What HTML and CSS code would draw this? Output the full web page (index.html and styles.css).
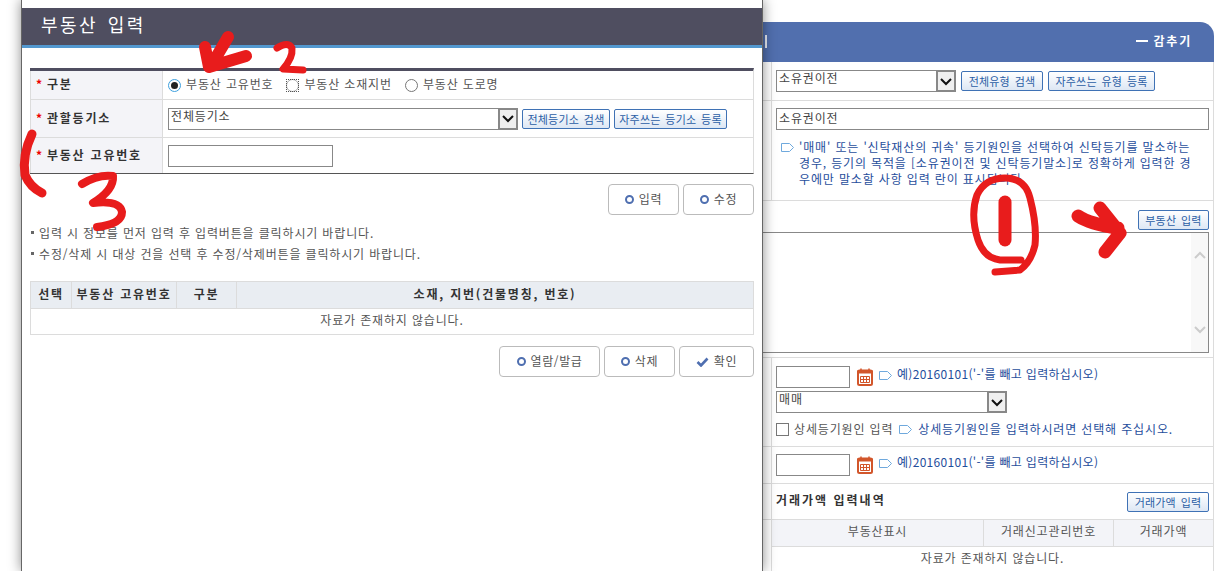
FILE: index.html
```html
<!DOCTYPE html>
<html lang="ko">
<head>
<meta charset="utf-8">
<title>부동산 입력</title>
<link rel="stylesheet" href="styles.css">
</head>
<body>
<div class="page">
  <section class="panel">
    <header class="panel-head"><span class="panel-bar"></span><span class="panel-toggle"><i class="dash"></i>감추기</span></header>
    <div class="row row-1">
      <div class="cell">
        <div class="select sel-type"><span>소유권이전</span><b class="arrow"><svg width="14" height="9" viewBox="0 0 14 9"><path d="M2 2l5 5 5-5" fill="none" stroke="#111" stroke-width="2"/></svg></b></div>
        <button class="btn-blue w82">전체유형 검색</button>
        <button class="btn-blue w107">자주쓰는 유형 등록</button>
      </div>
    </div>
    <div class="row row-2">
      <div class="cell cell-col">
        <div class="input input-full">소유권이전</div>
        <div class="note">
          <svg class="tag" width="13" height="9" viewBox="0 0 13 9"><path d="M.5.5h8l4 4-4 4h-8z" fill="#fff" stroke="#6fa9dd"/></svg>
          <p>'매매' 또는 '신탁재산의 귀속' 등기원인을 선택하여 신탁등기를 말소하는 경우, 등기의 목적을 [소유권이전 및 신탁등기말소]로 정확하게 입력한 경우에만 말소할 사항 입력 란이 표시됩니다.</p>
        </div>
      </div>
    </div>
    <div class="row row-3">
      <div class="row-3-btn"><button class="btn-blue w71">부동산 입력</button></div>
      <div class="textarea">
        <div class="scroll">
          <svg width="12" height="8" viewBox="0 0 12 8"><path d="M1 7l5-5 5 5" fill="none" stroke="#ccc" stroke-width="2"/></svg>
          <svg width="12" height="8" viewBox="0 0 12 8"><path d="M1 1l5 5 5-5" fill="none" stroke="#ccc" stroke-width="2"/></svg>
        </div>
      </div>
    </div>
    <div class="row row-4">
      <div class="cell cell-col">
        <div class="date-line">
          <div class="input input-date"></div>
          <svg class="cal" width="16" height="18" viewBox="0 0 16 18"><rect x="1" y="2.5" width="14" height="14.5" rx="1.5" fill="#fff" stroke="#d2562b" stroke-width="2"/><path d="M0 2.5h16v3H0z" fill="#d2562b"/><path d="M4 .5v3M12 .5v3" stroke="#d2562b" stroke-width="1.5"/><path d="M3.5 8.5h9v6h-9zM3.5 11.5h9M6.5 8.5v6M9.5 8.5v6" fill="none" stroke="#d2562b"/></svg>
          <svg class="tag" width="13" height="9" viewBox="0 0 13 9"><path d="M.5.5h8l4 4-4 4h-8z" fill="#fff" stroke="#6fa9dd"/></svg>
          <span class="hint hint-date">예)20160101('-'를 빼고 입력하십시오)</span>
        </div>
        <div class="select sel-cause"><span>매매</span><b class="arrow"><svg width="14" height="9" viewBox="0 0 14 9"><path d="M2 2l5 5 5-5" fill="none" stroke="#111" stroke-width="2"/></svg></b></div>
        <div class="check-line">
          <i class="check"></i><span>상세등기원인 입력</span>
          <svg class="tag" width="13" height="9" viewBox="0 0 13 9"><path d="M.5.5h8l4 4-4 4h-8z" fill="#fff" stroke="#6fa9dd"/></svg>
          <span class="hint">상세등기원인을 입력하시려면 선택해 주십시오.</span>
        </div>
      </div>
    </div>
    <div class="row row-5">
      <div class="cell">
        <div class="date-line">
          <div class="input input-date"></div>
          <svg class="cal" width="16" height="18" viewBox="0 0 16 18"><rect x="1" y="2.5" width="14" height="14.5" rx="1.5" fill="#fff" stroke="#d2562b" stroke-width="2"/><path d="M0 2.5h16v3H0z" fill="#d2562b"/><path d="M4 .5v3M12 .5v3" stroke="#d2562b" stroke-width="1.5"/><path d="M3.5 8.5h9v6h-9zM3.5 11.5h9M6.5 8.5v6M9.5 8.5v6" fill="none" stroke="#d2562b"/></svg>
          <svg class="tag" width="13" height="9" viewBox="0 0 13 9"><path d="M.5.5h8l4 4-4 4h-8z" fill="#fff" stroke="#6fa9dd"/></svg>
          <span class="hint hint-date">예)20160101('-'를 빼고 입력하십시오)</span>
        </div>
      </div>
    </div>
    <div class="row row-6">
      <div class="cell cell-between">
        <strong>거래가액 입력내역</strong>
        <button class="btn-blue w82">거래가액 입력</button>
      </div>
    </div>
    <div class="price-table">
      <div class="pt-row pt-head"><span>부동산표시</span><span>거래신고관리번호</span><span>거래가액</span></div>
      <div class="pt-empty">자료가 존재하지 않습니다.</div>
    </div>
  </section>

  <section class="modal">
    <h1 class="modal-title">부동산 입력</h1>
    <div class="modal-body">
      <div class="form">
        <div class="form-row fr-1">
          <div class="label"><em>*</em>구분</div>
          <div class="field radios">
            <span class="radio-item"><i class="radio on"></i><span>부동산 고유번호</span></span>
            <span class="radio-item"><i class="radio focus"></i><span>부동산 소재지번</span></span>
            <span class="radio-item"><i class="radio"></i><span>부동산 도로명</span></span>
          </div>
        </div>
        <div class="form-row fr-2">
          <div class="label"><em>*</em>관할등기소</div>
          <div class="field">
            <div class="select sel-office"><span>전체등기소</span><b class="arrow"><svg width="14" height="9" viewBox="0 0 14 9"><path d="M2 2l5 5 5-5" fill="none" stroke="#111" stroke-width="2"/></svg></b></div>
            <button class="btn-blue w88">전체등기소 검색</button>
            <button class="btn-blue w113">자주쓰는 등기소 등록</button>
          </div>
        </div>
        <div class="form-row fr-3">
          <div class="label"><em>*</em>부동산 고유번호</div>
          <div class="field"><div class="input input-no"></div></div>
        </div>
      </div>
      <div class="actions actions-top">
        <button class="btn"><i class="dot"></i>입력</button>
        <button class="btn"><i class="dot"></i>수정</button>
      </div>
      <ul class="notices">
        <li>입력 시 정보를 먼저 입력 후 입력버튼을 클릭하시기 바랍니다.</li>
        <li>수정/삭제 시 대상 건을 선택 후 수정/삭제버튼을 클릭하시기 바랍니다.</li>
      </ul>
      <div class="list">
        <div class="list-head"><span>선택</span><span>부동산 고유번호</span><span>구분</span><span>소재, 지번(건물명칭, 번호)</span></div>
        <div class="list-empty">자료가 존재하지 않습니다.</div>
      </div>
      <div class="actions actions-bottom">
        <button class="btn btn-wide"><i class="dot"></i>열람/발급</button>
        <button class="btn"><i class="dot"></i>삭제</button>
        <button class="btn btn-ok"><svg width="13" height="10" viewBox="0 0 13 10"><path d="M1.5 5l3.5 3.5 6.5-7" fill="none" stroke="#4f6fb0" stroke-width="2.6"/></svg>확인</button>
      </div>
    </div>
  </section>

  <svg class="scribble" width="1225" height="571" viewBox="0 0 1225 571" fill="none" stroke="#e81c1c" stroke-linecap="round" stroke-linejoin="round">
    <path stroke-width="12" d="M228 37L211 66M205 47L209 67L246 56"/>
    <path stroke-width="7" d="M277 48Q288 41 292 48Q293 58 283 69L303 70"/>
    <path stroke-width="9" d="M32 134Q22 155 25 175Q30 187 42 193"/>
    <path stroke-width="8" d="M82 184Q98 174 113 176Q114 190 93 203Q120 200 122 212Q122 224 97 227"/>
    <path stroke-width="7" d="M1021 260L1000 260Q984 258 978 240Q970 215 977 195Q985 178 1005 178Q1025 178 1030 198Q1037 225 1035 245Q1031 262 1020 270L995 272"/>
    <path stroke-width="13" d="M1005 202L1005 240"/>
    <path stroke-width="13" d="M1078 216Q1090 224 1118 228M1100 208L1120 233L1105 252"/>
  </svg>
</div>
</body>
</html>
```
FILE: styles.css
```css
* { box-sizing: border-box; }
html, body { margin: 0; padding: 0; background: #fff; }
body { font-family: "Noto Sans CJK KR", "Noto Sans", sans-serif; font-size: 12px; color: #555; letter-spacing: .85px; }
i, em { font-style: normal; }
p, ul, h1 { margin: 0; padding: 0; }
.page { position: relative; width: 1225px; height: 571px; overflow: hidden; }

/* background panel */
.panel { width: 474px; margin: 22px 0 0 740px; height: 549px; display: flex; flex-direction: column; }
.panel-head { height: 40px; background: #516fae; border-radius: 0 14px 0 0; display: flex; align-items: center; justify-content: space-between; color: #fff; font-weight: 700; padding: 0 22px 2px 25px; flex: none; letter-spacing: 1.8px; }
.panel-bar { width: 2px; height: 13px; background: #e8ecf5; }
.panel-toggle { display: flex; align-items: center; gap: 5px; font-size: 12px; line-height: 14px; }
.dash { width: 12px; height: 2px; background: #fff; }
.row { flex: none; border-bottom: 1px solid #dcdcdc; border-right: 1px solid #dcdcdc; padding-left: 31px; display: flex; }
.cell { flex: 1; border-left: 1px solid #dcdcdc; padding: 0 4px 0 4px; display: flex; align-items: center; gap: 5px; min-width: 0; }
.cell-col { flex-direction: column; align-items: flex-start; gap: 0; }
.cell-between { justify-content: space-between; }
.cell-between strong { color: #333; font-size: 12px; letter-spacing: 2px; padding-bottom: 4px; }
.row-1 { height: 39px; }
.row-2 { height: 100px; }
.row-2 .cell { padding-top: 7px; }
.row-3 { height: 157px; padding-left: 0; flex-direction: column; }
.row-3-btn { display: flex; justify-content: flex-end; height: 31px; padding: 9px 4px 0 0; }
.row-4 { height: 89px; }
.row-4 .cell { padding-top: 8px; }
.row-5 { height: 37px; }
.row-6 { height: 36px; border-bottom-color: #dcdcdc; }

.select { display: flex; justify-content: space-between; height: 22px; border: 1px solid #888; background: #fff; color: #444; padding-left: 2px; line-height: 14px; flex: none; }
.arrow { width: 20px; height: 22px; margin: -1px -1px 0 0; background: #efefef; border: 2px solid #888; display: flex; align-items: center; justify-content: center; }
.sel-type { width: 180px; }
.sel-cause { width: 231px; margin-top: 3px; }
.sel-office { width: 350px; }
.input { height: 22px; border: 1px solid #888; background: #fff; color: #444; padding-left: 2px; line-height: 18px; flex: none; }
.input-full { width: 433px; }
.input-date { width: 74px; }
.input-no { width: 165px; height: 22px; }
.date-line { display: flex; align-items: center; }
.cal { margin-left: 7px; }
.tag { flex: none; margin-left: 6px; }
.date-line .tag { margin-bottom: 3px; }
.hint { color: #1f4e9c; margin-left: 6px; line-height: 14px; }
.hint-date { letter-spacing: .3px; padding-bottom: 7px; margin-left: 5px; }
.note { display: flex; align-items: flex-start; margin: 9px 0 0 0; }
.note .tag { margin: 4px 5px 0 5px; }
.note p { width: 400px; color: #1f4e9c; line-height: 16px; word-break: break-all; }
.check-line { display: flex; align-items: center; margin-top: 7px; }
.check-line span { padding-bottom: 2px; }
.check { width: 13px; height: 13px; border: 1px solid #777; background: #fff; margin-right: 5px; }
.check-line .hint { margin-left: 6px; }

.textarea { height: 121px; margin-right: 4px; border: 1px solid #888; border-left: 0; background: #fff; display: flex; justify-content: flex-end; }
.scroll { width: 17px; background: #f8f8f8; display: flex; flex-direction: column; justify-content: space-between; align-items: center; padding: 18px 0 18px; }

.btn-blue { height: 20px; border: 1px solid #3f72b5; border-radius: 2px; background: linear-gradient(#fff, #dde7f4); color: #2b5ea5; font: 400 11px/16px "Noto Sans CJK KR", sans-serif; letter-spacing: .2px; word-spacing: 1.5px; padding: 0; white-space: nowrap; flex: none; text-align: center; }
.w71 { width: 71px; }
.w82 { width: 82px; }
.w88 { width: 88px; }
.w107 { width: 107px; }
.w113 { width: 113px; }

.price-table { border-right: 1px solid #dcdcdc; margin-left: 31px; border-left: 1px solid #dcdcdc; flex: none; }
.pt-row { display: grid; grid-template-columns: 211px 130px 1fr; }
.pt-head { background: #f3f4f8; height: 27px; border-bottom: 1px solid #dcdcdc; text-align: center; line-height: 22px; }
.pt-head span + span { border-left: 1px solid #dcdcdc; }
.pt-empty { text-align: center; height: 24px; line-height: 22px; }

/* modal */
.modal { position: absolute; left: 21px; top: 0; width: 742px; height: 571px; background: #fff; border-left: 1px solid #666; border-right: 1px solid #666; box-shadow: 0 0 12px rgba(0,0,0,.45); padding-top: 8px; }
.modal-title { height: 40px; background: #4f4e60; border-bottom: 3px solid #5398cf; color: #fff; font-size: 18px; font-weight: 400; line-height: 32px; padding-left: 19px; letter-spacing: 2.5px; word-spacing: 2px; }
.modal-body { padding: 20px 8px 0 8px; }
.form { border-top: 3px solid #4f4e60; border-right: 1px solid #dcdcdc; border-bottom: 1px solid #555; }
.form-row { display: flex; }
.form-row + .form-row { border-top: 1px solid #dcdcdc; }
.fr-1 { height: 28px; }
.fr-2 { height: 38px; }
.fr-3 { height: 36px; }
.label { width: 133px; flex: none; background: #f4f4f8; border-left: 1px solid #dcdcdc; border-right: 1px solid #dcdcdc; color: #333; font-weight: 700; letter-spacing: 1.8px; display: flex; align-items: center; padding: 0 0 3px 5px; }
.label em { color: #e00; margin-right: 3px; font-weight: 700; }
.field { flex: 1; display: flex; align-items: center; gap: 4px; padding-left: 5px; }
.radios { gap: 13px; }
.radio-item { display: flex; align-items: center; gap: 5px; }
.radio-item span { padding-bottom: 3px; }
.radio { width: 13px; height: 13px; border-radius: 50%; border: 1px solid #777; background: #fff; display: block; position: relative; }
.radio.on { border-color: #3ea0de; }
.radio.on::after { content: ""; position: absolute; inset: 2px; border-radius: 50%; background: #222; }
.radio.focus { border-color: #aaa; }
.radio.focus::before { content: ""; position: absolute; inset: -1px; border: 1px dotted #555; }

.actions { display: flex; justify-content: flex-end; gap: 4px; }
.actions-top { margin-top: 10px; }
.actions-bottom { margin-top: 11px; gap: 4px; }
.btn { width: 71px; height: 31px; border: 1px solid #bbb; border-radius: 4px; background: #fff; color: #555; font: 400 12px "Noto Sans CJK KR", sans-serif; letter-spacing: .6px; display: flex; align-items: center; justify-content: center; gap: 5px; padding: 0 0 3px; }
.btn-wide { width: 101px; }
.btn-ok { width: 75px; }
.dot { width: 9px; height: 9px; border: 2.5px solid #4f6fb0; border-radius: 50%; background: #fff; margin-top: 2px; }
.btn svg { margin-top: 3px; }

.notices { list-style: none; margin-top: 7px; }
.notices li { line-height: 21px; padding-left: 9px; position: relative; }
.notices li::before { content: ""; position: absolute; left: 1px; top: 9px; width: 3px; height: 3px; background: #666; }
.list { margin-top: 17px; border: 1px solid #dcdcdc; }
.list-head { display: grid; grid-template-columns: 40px 105px 60px 1fr; background: #e9edf2; height: 27px; border-bottom: 1px solid #dcdcdc; font-weight: 700; letter-spacing: 1.8px; color: #333; text-align: center; line-height: 23px; }
.list-head span + span { border-left: 1px solid #dcdcdc; }
.list-empty { height: 25px; line-height: 22px; text-align: center; }

.scribble { position: absolute; left: 0; top: 0; pointer-events: none; }
```
